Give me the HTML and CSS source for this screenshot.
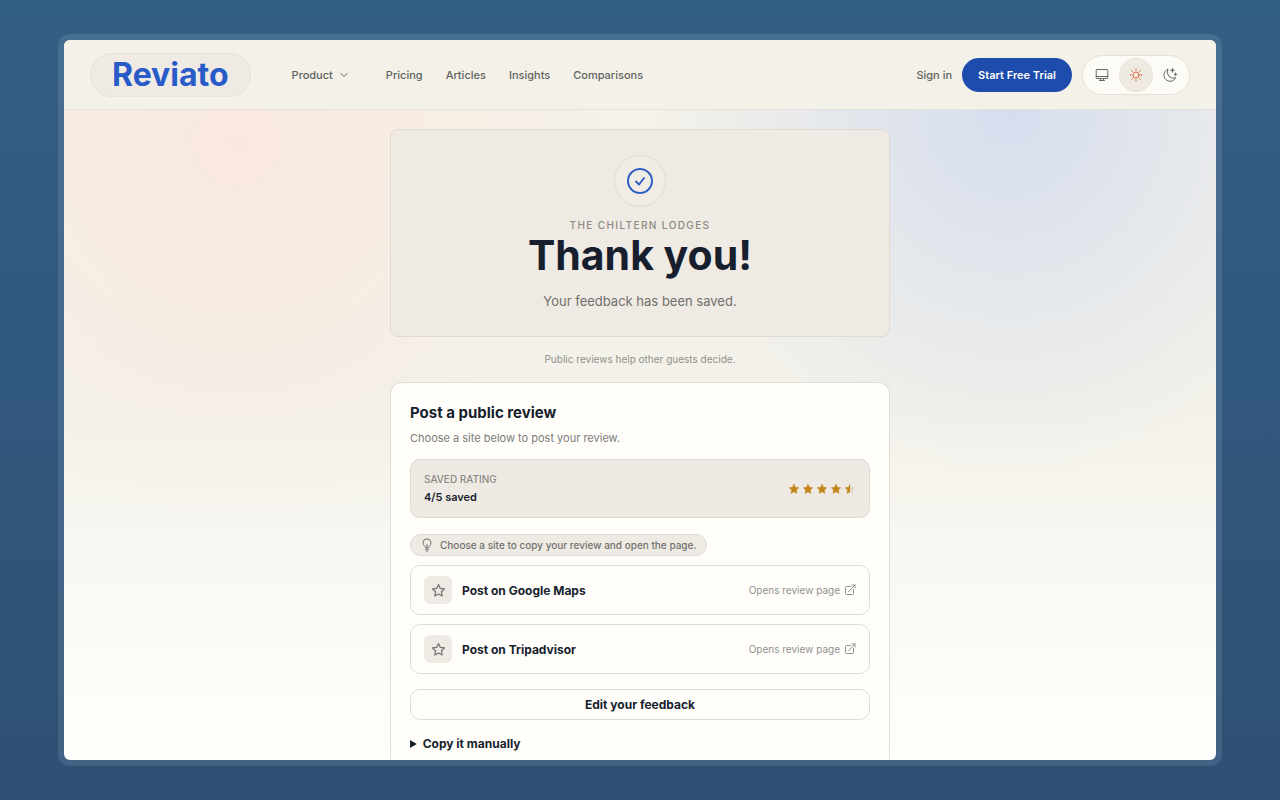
FILE: index.html
```html
<!DOCTYPE html>
<html lang="en">
<head>
    <meta charset="UTF-8">
    <meta name="viewport" content="width=device-width, initial-scale=1.0">
    <title>Thank you - Reviato</title>
    <link rel="stylesheet" href="styles.css">
</head>
<body>
    <!-- Shared icons -->
    <svg class="sprite" aria-hidden="true">
        <symbol id="star" viewBox="0 0 24 24">
            <path d="M12 2.5l2.900 6.100 6.600.9-4.800 4.600 1.200 6.700-5.900-3.200-5.900 3.200 1.200-6.700L2.500 9.500l6.600-.9z"/>
        </symbol>
        <symbol id="external" viewBox="0 0 24 24">
            <path d="M13 5H5a2 2 0 0 0-2 2v12a2 2 0 0 0 2 2h12a2 2 0 0 0 2-2v-8M15.500 2H22v6.500M22 2L9 15.500"/>
        </symbol>
    </svg>

    <div class="window">
        <header class="header">
            <a href="#" class="logo">Reviato</a>
            <nav class="nav">
                <button type="button" class="nav-product">Product
                    <svg class="chevron" viewBox="0 0 10 10"><path d="M2 3.500l3 3 3-3"/></svg>
                </button>
                <a href="#">Pricing</a>
                <a href="#">Articles</a>
                <a href="#">Insights</a>
                <a href="#">Comparisons</a>
            </nav>
            <div class="actions">
                <a href="#" class="sign-in">Sign in</a>
                <a href="#" class="trial">Start Free Trial</a>
                <div class="theme">
                    <button type="button" aria-label="System theme">
                        <svg viewBox="0 0 16 16"><path d="M3 2.500h10a.8.8 0 0 1 .8.8v7.400a.8.8 0 0 1-.8.8H3a.8.8 0 0 1-.8-.8V3.300a.8.8 0 0 1 .8-.8zM2.200 9.500h11.600M6.500 11.500v2M9.500 11.500v2M5.500 13.500h5"/></svg>
                    </button>
                    <button type="button" class="active" aria-label="Light theme">
                        <svg viewBox="0 0 16 16"><circle cx="8" cy="8" r="3"/><path d="M8 2v1.500M8 12.500V14M2 8h1.500M12.500 8H14M3.700 3.700l1.100 1.100M11.200 11.200l1.100 1.100M3.700 12.300l1.100-1.100M11.200 4.800l1.100-1.100"/></svg>
                    </button>
                    <button type="button" aria-label="Dark theme">
                        <svg viewBox="0 0 16 16"><path d="M5.800 2.300a6.200 6.200 0 1 0 7.900 8.400A6.200 6.200 0 0 1 5.800 2.300z"/><path class="spark" d="M10.500.5l.8 2 2 .8-2 .8-.8 2-.8-2-2-.8 2-.8zM13.600 5l.6 1.700 1.700.6-1.700.6-.6 1.700-.6-1.700-1.700-.6 1.700-.6z"/></svg>
                    </button>
                </div>
            </div>
        </header>

        <main class="content">
            <section class="hero">
                <div class="hero-icon">
                    <svg viewBox="0 0 28 28"><circle cx="14" cy="14" r="12"/><path d="M10 14.500l3 3 5-6.500"/></svg>
                </div>
                <p class="eyebrow">The Chiltern Lodges</p>
                <h1>Thank you!</h1>
                <p class="lead">Your feedback has been saved.</p>
            </section>

            <p class="note">Public reviews help other guests decide.</p>

            <section class="card">
                <h2>Post a public review</h2>
                <p class="sub">Choose a site below to post your review.</p>

                <div class="rating">
                    <div>
                        <p class="rating-label">Saved rating</p>
                        <p class="rating-value">4/5 saved</p>
                    </div>
                    <div class="stars" role="img" aria-label="Rating stars">
                        <svg><use href="#star"/></svg>
                        <svg><use href="#star"/></svg>
                        <svg><use href="#star"/></svg>
                        <svg><use href="#star"/></svg>
                        <span class="half-star">
                            <svg class="star-empty"><use href="#star"/></svg>
                            <svg class="star-half"><use href="#star"/></svg>
                        </span>
                    </div>
                </div>

                <p class="tip">
                    <svg viewBox="0 0 14 14"><path d="M5.500 9.500C5.500 8 3 7.500 3 4.800a4 4 0 0 1 8 0C11 7.500 8.500 8 8.500 9.500zM7 9.500V6.500M5.500 11.300h3M6.300 13h1.400"/></svg>
                    Choose a site to copy your review and open the page.
                </p>

                <div class="sites">
                    <a href="#" class="site">
                        <span class="site-icon"><svg><use href="#star"/></svg></span>
                        <span class="site-name">Post on Google Maps</span>
                        <span class="site-hint">Opens review page <svg><use href="#external"/></svg></span>
                    </a>
                    <a href="#" class="site">
                        <span class="site-icon"><svg><use href="#star"/></svg></span>
                        <span class="site-name">Post on Tripadvisor</span>
                        <span class="site-hint">Opens review page <svg><use href="#external"/></svg></span>
                    </a>
                </div>

                <button type="button" class="edit">Edit your feedback</button>

                <details>
                    <summary>Copy it manually</summary>
                </details>
            </section>
        </main>
    </div>
</body>
</html>
```
FILE: styles.css
```css
* {
    box-sizing: border-box;
}
body {
    margin: 0;
    height: 100vh;
    padding: 40px 5%;
    overflow: hidden;
    font-family: Inter, "Open Sans", sans-serif;
    font-size: 12px;
    color: #171f2e;
    background: linear-gradient(#345f85, #2e5074);
}
h1, h2, p {
    margin: 0;
}
a {
    color: inherit;
    text-decoration: none;
}
button {
    font: inherit;
    color: inherit;
    background: none;
    border: none;
    padding: 0;
    cursor: pointer;
}
svg {
    display: block;
    fill: none;
    stroke: currentColor;
    stroke-linecap: round;
    stroke-linejoin: round;
}
.sprite {
    display: none;
}

.window {
    height: 100%;
    overflow: hidden;
    border-radius: 6px;
    box-shadow: 0 0 0 6px rgba(255, 255, 255, 0.1);
    background:
        radial-gradient(circle at 15% 14%, rgba(255, 224, 214, 0.5), rgba(255, 224, 214, 0) 380px),
        radial-gradient(circle at 82% 10%, rgba(203, 215, 240, 0.75), rgba(203, 215, 240, 0) 360px),
        linear-gradient(#f5f2e9, #f3f1e9 50%, #fffffc);
}

/* Header */
.header {
    display: flex;
    align-items: center;
    height: 70px;
    padding: 0 26px;
    background: #f4f1e8;
    border-bottom: 1px solid #e5e2da;
}
.logo {
    padding: 0 21px;
    border: 1px solid #e7e3dc;
    border-radius: 22px;
    background: #efeae4;
    color: #285ac8;
    font-size: 32px;
    line-height: 42px;
    font-weight: 700;
}
.nav {
    display: flex;
    align-items: center;
    gap: 23px;
    margin-left: 41px;
    color: #60635f;
    font-size: 11px;
    font-weight: 500;
}
.nav-product {
    display: flex;
    align-items: center;
    gap: 6px;
    margin-right: 14px;
}
.chevron {
    width: 10px;
    height: 10px;
}
.actions {
    display: flex;
    align-items: center;
    gap: 10px;
    margin-left: auto;
}
.sign-in {
    color: #60635f;
    font-size: 11px;
    font-weight: 500;
}
.trial {
    padding: 0 16px;
    border-radius: 17px;
    background: #1d4cac;
    color: #fff;
    font-size: 11px;
    line-height: 34px;
    font-weight: 600;
}
.theme {
    display: flex;
    padding: 2px;
    border: 1px solid #e5e2da;
    border-radius: 20px;
    background: #fcfbf5;
    color: #686967;
}
.theme button {
    display: grid;
    place-items: center;
    width: 34px;
    height: 34px;
    border: 1px solid transparent;
    border-radius: 50%;
}
.theme .active {
    background: #efebe2;
    border-color: #e7e2d9;
    color: #d9683c;
}
.theme svg {
    width: 16px;
    height: 16px;
}
.spark {
    fill: currentColor;
    stroke: none;
}

/* Page content */
.content {
    max-width: 500px;
    margin: 19px auto 0;
}
.hero {
    display: flex;
    flex-direction: column;
    align-items: center;
    padding: 25px 20px;
    border: 1px solid #dfdbd1;
    border-radius: 8px;
    background: #efeae3;
    text-align: center;
}
.hero-icon {
    display: grid;
    place-items: center;
    width: 52px;
    height: 52px;
    border: 1px solid #e0dcd3;
    border-radius: 50%;
    background: #f1ede6;
    color: #2f60c5;
}
.hero-icon svg {
    width: 28px;
    height: 28px;
    stroke-width: 2;
}
.eyebrow {
    margin-top: 10px;
    color: #8b8983;
    font-size: 10px;
    line-height: 16px;
    font-weight: 500;
    letter-spacing: 0.14em;
    text-transform: uppercase;
}
h1 {
    font-size: 41px;
    line-height: 44px;
    font-weight: 700;
}
.lead {
    margin-top: 14px;
    color: #70716e;
    font-size: 13px;
    line-height: 20px;
}
.note {
    margin: 14px 0 15px;
    color: #90918c;
    font-size: 10px;
    line-height: 16px;
    text-align: center;
}
.card {
    padding: 19px;
    border: 1px solid #dfddd5;
    border-radius: 12px;
    background: #fffefb;
}
h2 {
    font-size: 15px;
    line-height: 22px;
    font-weight: 700;
}
.sub {
    margin-top: 5px;
    color: #7c7d7a;
    font-size: 11px;
    line-height: 18px;
}
.rating {
    display: flex;
    align-items: center;
    justify-content: space-between;
    margin-top: 12px;
    padding: 10px 13px;
    border: 1px solid #dedad1;
    border-radius: 10px;
    background: #eeeae3;
}
.rating-label {
    color: #8c8b87;
    font-size: 10px;
    line-height: 18px;
    font-weight: 500;
    text-transform: uppercase;
}
.rating-value {
    font-size: 11px;
    line-height: 19px;
    font-weight: 600;
}
.stars {
    display: flex;
    gap: 2px;
    color: #c48419;
}
.stars svg {
    width: 12px;
    height: 12px;
    fill: currentColor;
}
.half-star {
    display: grid;
}
.half-star svg {
    grid-area: 1 / 1;
}
.stars .star-empty {
    color: #dfd8cb;
}
.star-half {
    clip-path: inset(0 50% 0 0);
}
.tip {
    display: flex;
    align-items: center;
    gap: 6px;
    width: fit-content;
    margin: 16px 0 9px;
    padding: 0 10px 0 9px;
    border: 1px solid #dedbd2;
    border-radius: 11px;
    background: #eeebe4;
    color: #73716f;
    font-size: 10px;
    line-height: 20px;
    font-weight: 500;
}
.tip svg {
    width: 14px;
    height: 14px;
}
.sites {
    display: grid;
    gap: 9px;
}
.site {
    display: flex;
    align-items: center;
    gap: 10px;
    height: 50px;
    padding: 0 13px;
    border: 1px solid #dfddd7;
    border-radius: 10px;
}
.site-icon {
    display: grid;
    place-items: center;
    width: 28px;
    height: 28px;
    border-radius: 6px;
    background: #eeebe5;
    color: #777674;
}
.site-icon svg {
    width: 15px;
    height: 15px;
    stroke-width: 2;
}
.site-name {
    font-size: 12px;
    font-weight: 700;
}
.site-hint {
    display: flex;
    align-items: center;
    gap: 4px;
    margin-left: auto;
    color: #92918e;
    font-size: 10px;
}
.site-hint svg {
    width: 12px;
    height: 12px;
    stroke-width: 2;
}
.edit {
    width: 100%;
    height: 31px;
    margin-top: 15px;
    border: 1px solid #dfddd7;
    border-radius: 10px;
    font-weight: 700;
    font-size: 12px;
}
details {
    margin-top: 14px;
}
summary {
    font-size: 12px;
    line-height: 20px;
    font-weight: 700;
    cursor: pointer;
}
```
